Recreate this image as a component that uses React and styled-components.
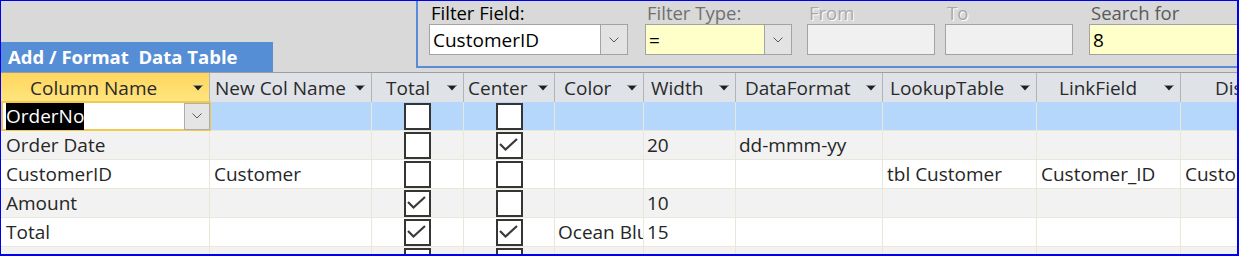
import React from 'react';
import styled, { createGlobalStyle } from 'styled-components';

const FONT = `"Open Sans", "Noto Sans", sans-serif`;

const Global = createGlobalStyle`
  html, body { margin: 0; padding: 0; background: #ffffff; overflow: hidden; }
  * { box-sizing: border-box; }
`;

const COLS = '209px 162px 92px 91px 89px 92px 147px 154px 144px 160px';

const Window = styled.div`
  width: 1239px;
  height: 256px;
  border: 1px solid #0000ee;
  border-right-width: 2px;
  border-bottom-width: 2px;
  background: #d9d9d9;
  overflow: hidden;
  display: flex;
  flex-direction: column;
  font-family: ${FONT};
`;

const TopArea = styled.div`
  height: 71px;
  display: flex;
  align-items: flex-start;
  flex: none;
`;

const TitleTab = styled.div`
  align-self: flex-end;
  width: 272px;
  height: 30px;
  background: #558ed5;
  color: #ffffff;
  font-weight: 700;
  font-size: 18.5px;
  line-height: 30px;
  padding-left: 7px;
  white-space: pre;
`;

const FilterFrame = styled.div`
  margin-left: 143px;
  height: 67px;
  flex: 1;
  display: flex;
  align-items: flex-start;
  border-left: 2px solid #5b8ad6;
  border-bottom: 2px solid #5b8ad6;
  padding-left: 11px;
  overflow: hidden;
`;

const Field = styled.div`
  display: flex;
  flex-direction: column;
  flex: none;
  margin-left: ${(p) => p.$gap || 0}px;
`;

const FieldLabel = styled.div`
  height: 23px;
  padding-left: 2px;
  padding-top: 1px;
  font-size: 18.5px;
  line-height: 21px;
  color: ${(p) => p.$color};
  text-shadow: ${(p) => (p.$disabled ? '1px 1px 0 #ffffff' : 'none')};
  white-space: nowrap;
`;

const Box = styled.div`
  width: ${(p) => p.$w}px;
  height: 31px;
  border: 1px solid #a3a3a3;
  background: ${(p) => p.$bg};
  display: flex;
  align-items: center;
  font-size: 19px;
  color: #000000;
  padding-left: 1px;
`;

const BoxText = styled.span`
  flex: 1;
  white-space: nowrap;
  overflow: hidden;
  padding-left: 2px;
`;

const DropButton = styled.div`
  width: 27px;
  height: 100%;
  flex: none;
  background: #e3e3e3;
  border-left: 1px solid #a3a3a3;
  display: flex;
  align-items: center;
  justify-content: center;
`;

const Chevron = () => (
  <svg width="10" height="6" viewBox="0 0 10 6">
    <polyline points="0.5,0.5 5,5 9.5,0.5" fill="none" stroke="#5a5a5a" strokeWidth="1" />
  </svg>
);

const HeaderRow = styled.div`
  display: grid;
  grid-template-columns: ${COLS};
  height: 30px;
  border-top: 1px solid #9e9e9e;
  flex: none;
`;

const HeaderCell = styled.div`
  display: flex;
  align-items: center;
  border-right: 1px solid #b4b4b4;
  background: ${(p) =>
    p.$active ? 'linear-gradient(#ffd65c, #ffe580)' : '#dfe3e8'};
  color: #2a2a2a;
  font-size: 19px;
  overflow: hidden;
  white-space: nowrap;
`;

const HeaderLabel = styled.span`
  flex: 1;
  padding-left: ${(p) => p.$pad}px;
  overflow: hidden;
`;

const SortArrow = styled.svg`
  flex: none;
  margin-right: 6px;
`;

const FilterArrow = () => (
  <SortArrow width="10" height="6" viewBox="0 0 10 6">
    <rect x="0" y="0" width="10" height="1" fill="#8a8a8a" />
    <polygon points="1,1 9,1 5,5.5" fill="#1e1e1e" />
  </SortArrow>
);

const Row = styled.div`
  display: grid;
  grid-template-columns: ${COLS};
  height: 29px;
  flex: none;
  border-bottom: 1px solid #e9e6da;
  background: ${(p) => (p.$selected ? '#b5d7fb' : p.$alt ? '#f2f2f2' : '#ffffff')};
`;

const Cell = styled.div`
  display: flex;
  align-items: center;
  justify-content: ${(p) => (p.$center ? 'center' : 'flex-start')};
  border-right: 1px solid #e9e6da;
  padding-left: ${(p) => (p.$center ? 0 : p.$pad ?? 4)}px;
  font-size: 19px;
  color: #262626;
  white-space: nowrap;
  overflow: hidden;
`;

const EditorCell = styled.div`
  display: flex;
  align-items: center;
  background: #ffffff;
  box-shadow: inset 0 0 0 2px #f2c94c;
  padding-left: 5px;
  padding-right: 1px;
  font-size: 19px;
  margin-top: -1px;
  height: 30px;
  margin-right: -1px;
`;

const Selected = styled.span`
  background: #000000;
  color: #ffffff;
  line-height: 27px;
  height: 27px;
`;

const EditorSpacer = styled.span`
  flex: 1;
`;

const EditorButton = styled.div`
  width: 26px;
  height: 27px;
  border: 1px solid #adadad;
  background: #e5e5e5;
  display: flex;
  align-items: center;
  justify-content: center;
  flex: none;
`;

const CheckBoxBox = styled.div`
  width: 27px;
  height: 27px;
  border: 2px solid #353535;
  background: #ffffff;
  display: flex;
  align-items: center;
  justify-content: center;
  flex: none;
`;

const CheckBox = ({ checked }) => (
  <CheckBoxBox>
    {checked && (
      <svg width="23" height="23" viewBox="0 0 23 23">
        <polyline points="2,10 7.5,15.5 19,5" fill="none" stroke="#3a3a3a" strokeWidth="2.2" />
      </svg>
    )}
  </CheckBoxBox>
);

const headers = [
  { t: 'Column Name', pad: 29, active: true },
  { t: 'New Col Name', pad: 5 },
  { t: 'Total', pad: 14 },
  { t: 'Center', pad: 4 },
  { t: 'Color', pad: 9 },
  { t: 'Width', pad: 7 },
  { t: 'DataFormat', pad: 9 },
  { t: 'LookupTable', pad: 7 },
  { t: 'LinkField', pad: 22 },
  { t: 'Display', pad: 34 },
];

const rows = [
  { name: 'OrderNo', editing: true, total: false, center: false },
  { name: 'Order Date', total: false, center: true, width: '20', fmt: 'dd-mmm-yy' },
  { name: 'CustomerID', newName: 'Customer', total: false, center: false, lookup: 'tbl Customer', link: 'Customer_ID', disp: 'Customer' },
  { name: 'Amount', total: true, center: false, width: '10' },
  { name: 'Total', total: true, center: true, color: 'Ocean Blue', width: '15' },
  { name: '', total: false, center: false },
];

export default function App() {
  return (
    <>
      <Global />
      <Window>
        <TopArea>
          <TitleTab>Add / Format  Data Table</TitleTab>
          <FilterFrame>
            <Field>
              <FieldLabel $color="#000000">Filter Field:</FieldLabel>
              <Box $w={199} $bg="#ffffff">
                <BoxText>CustomerID</BoxText>
                <DropButton><Chevron /></DropButton>
              </Box>
            </Field>
            <Field $gap={17}>
              <FieldLabel $color="#707070">Filter Type:</FieldLabel>
              <Box $w={147} $bg="#ffffc9">
                <BoxText>=</BoxText>
                <DropButton><Chevron /></DropButton>
              </Box>
            </Field>
            <Field $gap={15}>
              <FieldLabel $color="#a8a8a8" $disabled>From</FieldLabel>
              <Box $w={128} $bg="#f0f0f0" />
            </Field>
            <Field $gap={10}>
              <FieldLabel $color="#a8a8a8" $disabled>To</FieldLabel>
              <Box $w={128} $bg="#f0f0f0" />
            </Field>
            <Field $gap={16}>
              <FieldLabel $color="#595959">Search for</FieldLabel>
              <Box $w={220} $bg="#ffffc9">
                <BoxText>8</BoxText>
              </Box>
            </Field>
          </FilterFrame>
        </TopArea>

        <HeaderRow>
          {headers.map((h) => (
            <HeaderCell key={h.t} $active={h.active}>
              <HeaderLabel $pad={h.pad}>{h.t}</HeaderLabel>
              <FilterArrow />
            </HeaderCell>
          ))}
        </HeaderRow>

        {rows.map((r, i) => (
          <Row key={i} $selected={i === 0} $alt={i % 2 === 1}>
            {r.editing ? (
              <EditorCell>
                <Selected>{r.name}</Selected>
                <EditorSpacer />
                <EditorButton><Chevron /></EditorButton>
              </EditorCell>
            ) : (
              <Cell $pad={5}>{r.name}</Cell>
            )}
            <Cell>{r.newName}</Cell>
            <Cell $center><CheckBox checked={r.total} /></Cell>
            <Cell $center><CheckBox checked={r.center} /></Cell>
            <Cell $pad={3}>{r.color}</Cell>
            <Cell $pad={3}>{r.width}</Cell>
            <Cell $pad={3}>{r.fmt}</Cell>
            <Cell>{r.lookup}</Cell>
            <Cell>{r.link}</Cell>
            <Cell>{r.disp}</Cell>
          </Row>
        ))}
      </Window>
    </>
  );
}
